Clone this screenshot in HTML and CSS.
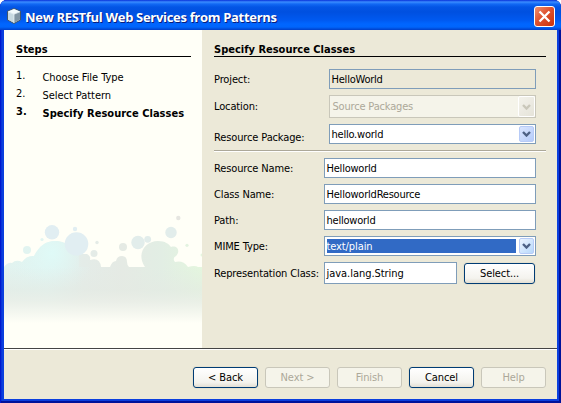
FILE: index.html
```html
<!DOCTYPE html>
<html lang="en">
<head>
<meta charset="utf-8">
<title>New RESTful Web Services from Patterns</title>
<link rel="stylesheet" href="styles.css">
</head>
<body>
<div class="window">
  <header class="titlebar">
    <svg class="app-icon" width="16" height="16" viewBox="0 0 16 16">
      <path d="M8 .5 14.5 3.2V12L8 15.5 1.5 12V3.2Z" fill="#b9cbd6" stroke="#40566b"/>
      <path d="M2 3.5 8 1l6 2.5L8 6Z" fill="#f4fafc"/>
      <path d="M2 3.8 8 6.2v8.6L2 11.6Z" fill="#c8d9e1"/>
      <path d="M14 3.8 8 6.2v8.6l6-3.2Z" fill="#8295a3"/>
      <path d="M2 3.8 8 6.2l6-2.4M8 6.2v8.5" fill="none" stroke="#eef7fa" stroke-width=".7"/>
    </svg>
    <h1 class="title">New RESTful Web Services from Patterns</h1>
    <button class="close" aria-label="Close"><svg width="21" height="21" viewBox="0 0 21 21"><path d="m5.500 5.500 10 10m0-10-10 10" stroke="#fff" stroke-width="2.300"/></svg></button>
  </header>
  <main class="content">
    <aside class="steps">
      <h2 class="heading">Steps</h2>
      <ol class="step-list">
        <li><span class="num">1.</span><span>Choose File Type</span></li>
        <li><span class="num">2.</span><span>Select Pattern</span></li>
        <li class="current"><span class="num">3.</span><span>Specify Resource Classes</span></li>
      </ol>
      <svg class="bubbles" width="198" height="110" viewBox="4 214 198 110">
        <defs>
          <linearGradient id="hue" x1="4" x2="202" y1="0" y2="0" gradientUnits="userSpaceOnUse">
            <stop offset="0" stop-color="#e2f3ef"/><stop offset=".22" stop-color="#e1f5f2"/><stop offset=".4" stop-color="#e4ece8"/><stop offset=".6" stop-color="#e5eae4"/><stop offset=".8" stop-color="#e2eee4"/><stop offset="1" stop-color="#e4f6de"/>
          </linearGradient>
          <linearGradient id="shade" x1="0" x2="0" y1="267" y2="323" gradientUnits="userSpaceOnUse">
            <stop offset="0" stop-color="#e4eae4" stop-opacity="0"/><stop offset=".4" stop-color="#e4eae3" stop-opacity=".6"/><stop offset=".62" stop-color="#ebefe8" stop-opacity=".85"/><stop offset="1" stop-color="#fffff7"/>
          </linearGradient>
          <radialGradient id="cyan" cx="52" cy="253" r="42" gradientUnits="userSpaceOnUse">
            <stop offset="0" stop-color="#dffaf7"/><stop offset="1" stop-color="#e0f4f1" stop-opacity="0"/>
          </radialGradient>
        </defs>
        <g fill="url(#hue)">
          <path d="M4 267q4-5 8-4 4-4 10-1 5-7 12-6c5-10 12-15 21-15 14 0 20 10 24 14v5h4v7Z"/>
          <path d="M83 267v-3l-4-4v-6h8q4 2 3 6 10-3 11 7h9q2-6 6-6 1-5 6-5t5 6q0 3 2 5h16c-9-13 0-26 13-26 7 0 11 3 13 6 6-2 10 4 5 9q-4 2-1 6 8-2 13 5 7-2 10 0v1Z"/>
          <rect x="4" y="267" width="198" height="56"/>
          <circle cx="27" cy="250" r="4"/><circle cx="123" cy="247" r="4"/><circle cx="94" cy="253.500" r="3.500"/>
          <circle cx="97" cy="242.500" r="1.700"/><circle cx="42" cy="239.500" r="1.600"/><circle cx="187" cy="245.300" r="1.600"/><circle cx="202" cy="255" r="1.500"/>
        </g>
        <path d="M4 267q4-5 8-4 4-4 10-1 5-7 12-6c5-10 12-15 21-15 14 0 20 10 24 14v12h20v20H4Z" fill="url(#cyan)"/>
        <g fill="#e1eef2"><circle cx="52" cy="232.300" r="7.200"/><circle cx="75" cy="229" r="2.200"/><circle cx="76.500" cy="244" r="11.800"/></g>
        <g fill="#e2edeb"><circle cx="138" cy="242.500" r="6.700"/><circle cx="147.700" cy="239.300" r="3.400"/><circle cx="171" cy="232.500" r="5.700"/></g>
        <circle cx="178.300" cy="218" r="2.200" fill="#e6e6e1"/>
        <rect x="4" y="267" width="198" height="57" fill="url(#shade)"/>
      </svg>
    </aside>
    <section class="form">
      <h2 class="heading">Specify Resource Classes</h2>
      <div class="row project"><label>Project:</label><div class="field readonly"><span>HelloWorld</span></div></div>
      <div class="row location"><label>Location:</label><div class="field disabled"><span>Source Packages</span><i class="drop"><svg width="9" height="6"><path d="m1 1 3.500 3.500L8 1"/></svg></i></div></div>
      <div class="row package"><label>Resource Package:</label><div class="field"><span>hello.world</span><i class="drop"><svg width="9" height="6"><path d="m1 1 3.500 3.500L8 1"/></svg></i></div></div>
      <hr class="separator">
      <div class="row wide"><label>Resource Name:</label><div class="field"><span>Helloworld</span></div></div>
      <div class="row wide"><label>Class Name:</label><div class="field"><span>HelloworldResource</span></div></div>
      <div class="row wide"><label>Path:</label><div class="field"><span>helloworld</span></div></div>
      <div class="row wide"><label>MIME Type:</label><div class="field focused"><span>text/plain</span><i class="drop"><svg width="9" height="6"><path d="m1 1 3.500 3.500L8 1"/></svg></i></div></div>
      <div class="row wide representation"><label>Representation Class:</label><div class="field"><span>java.lang.String</span></div><button class="btn select">Select...</button></div>
    </section>
  </main>
  <footer class="actions">
    <button class="btn">&lt; Back</button>
    <button class="btn" disabled>Next &gt;</button>
    <button class="btn" disabled>Finish</button>
    <button class="btn">Cancel</button>
    <button class="btn" disabled>Help</button>
  </footer>
</div>
</body>
</html>
```

FILE: styles.css
```css
* { box-sizing: border-box; }
body { margin: 0; background: #fff; font: 11px/14px "DejaVu Sans Condensed", "DejaVu Sans", sans-serif; font-stretch: condensed; color: #000; overflow: hidden; }
h1, h2, ol { margin: 0; padding: 0; font-size: inherit; }
button { font: inherit; color: inherit; padding: 0; }
.window { width: 561px; height: 403px; display: flex; flex-direction: column; padding: 0 4px 4px; border-radius: 7px 7px 0 0; background: #0b3fde; box-shadow: inset 1px 0 #0019cf, inset -2px 0 #00129a, inset 0 -2px #00129a, inset 2px 0 #0833d9; }
.titlebar { height: 30px; margin: 0 -4px; padding: 1px 6px 0 6px; display: flex; align-items: center; border-radius: 7px 7px 0 0; background: linear-gradient(#0831d9 0, #3a8cff 2px, #1269f4 4px, #0355e5 7px, #0050e0 12px, #0059f0 20px, #0066ff 24px, #0065fc 27px, #003fc8 30px); }
.app-icon { flex: none; margin-right: 3px; }
.title { flex: 1; font: bold 13px/18px "Open Sans", sans-serif; letter-spacing: -.31px; color: #fff; white-space: nowrap; text-shadow: 1px 1px #0a1d7a; padding-top: 2px; }
.close { width: 21px; height: 21px; border: 1px solid #fff; border-radius: 3px; background: linear-gradient(135deg, #ee9070, #df5230 45%, #c93209); display: flex; align-items: center; justify-content: center; margin-top: 2px; }
.close svg { flex: none; }
.content { height: 318px; display: flex; }
.steps { width: 198px; background: #fffff7; padding: 12px 11px 0 12px; display: flex; flex-direction: column; }
.heading { height: 15px; line-height: 16px; border-bottom: 1px solid #000; font-weight: bold; white-space: nowrap; }
.step-list { list-style: none; margin-top: 13px; letter-spacing: -.05px; }
.step-list li { display: flex; height: 18px; line-height: 14px; padding-top: 1px; white-space: nowrap; }
.num { width: 26.500px; margin-top: -2px; }
.current { font-weight: bold; letter-spacing: .02px; }
.bubbles { margin: 90px 0 0 -12px; flex: none; }
.form { flex: 1; background: #ece9d8; padding: 12px 11px 0 12px; }
.row { display: flex; align-items: center; white-space: nowrap; height: 20px; margin-bottom: 6px; }
.row label { width: 115px; flex: none; letter-spacing: -.13px; padding-top: 2px; }
.wide label { width: 110px; }
.project { margin-top: 12px; }
.location { height: 23px; }
.location label { padding-top: 0; }
.package label { padding-top: 8px; }
.representation { height: 22px; }
.field { width: 207px; height: 100%; border: 1px solid #7f9db9; background: #fff; display: flex; align-items: center; justify-content: space-between; padding: 1px 1px 1px 1.500px; letter-spacing: -.22px; }
.field span { padding-top: 1px; }
.wide .field { width: 212px; }
.wide .field span { padding-top: 2px; }
.representation .field { width: 133px; letter-spacing: -.04px; }
.readonly { background: #ece9d8; }
.disabled { background: #f5f4ea; border-color: #c9c7ba; color: #aca899; padding-left: 2.500px; letter-spacing: -.18px; }
.wide .focused span { flex: 1; height: 14px; line-height: 16px; padding-top: 0; background: #316ac5; color: #fff; margin-right: 3px; letter-spacing: -.1px; }
.drop { flex: none; width: 15px; height: 16px; border: 1px solid #b7cbf7; border-radius: 2px; background: linear-gradient(135deg, #d9e5ff, #b5ccfa); display: flex; align-items: center; justify-content: center; }
.drop path { fill: none; stroke: #4d6185; stroke-width: 2.400; }
.disabled .drop { width: 17px; height: 21px; margin-right: -1px; border: 1px solid #fff; background: linear-gradient(135deg, #f3f2eb, #e5e3d9); }
.disabled .drop path { stroke: #c9c7ba; }
.focused .drop { background: linear-gradient(135deg, #edf5ff, #b7d8fb); }
.separator { height: 2px; margin: 0 0 6px; border: 0; background: linear-gradient(#aca899 50%, #fff 50%); }
.btn { width: 65px; height: 21px; border: 1px solid #003c74; border-radius: 3px; background: linear-gradient(#fff, #f4f3ee 75%, #e3dfd4); box-shadow: 0 0 0 1px #e5e1cf, 0 1px #faf8ef; line-height: 17px; white-space: nowrap; letter-spacing: -.1px; }
.btn:disabled { border-color: #c9c7ba; background: #f5f4ea; color: #aca899; box-shadow: none; }
.select { width: 71px; margin-left: 7px; }
.actions { height: 51px; border-top: 1px solid #444; box-shadow: inset 0 1px #fff; background: #ece9d8; display: flex; justify-content: flex-end; gap: 7px; padding: 18px 11px 0 0; }
```
